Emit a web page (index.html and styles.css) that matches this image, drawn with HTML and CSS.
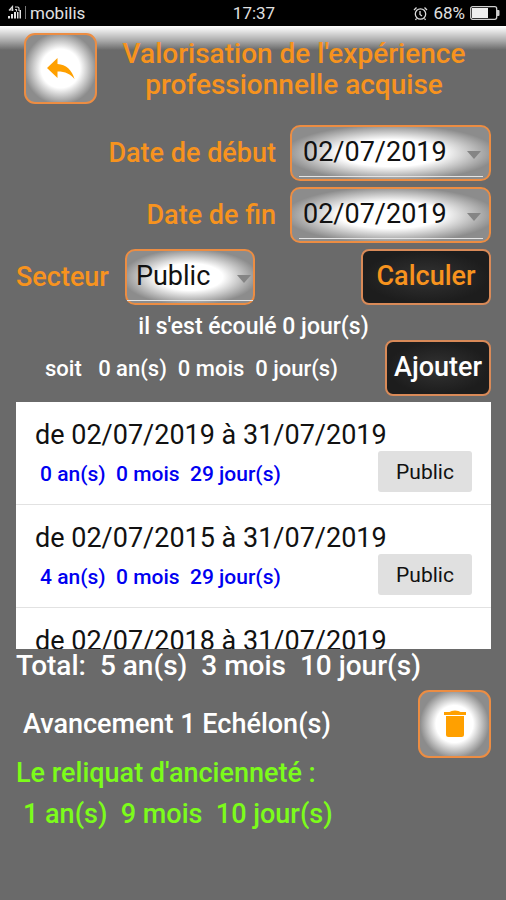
FILE: index.html
```html
<!DOCTYPE html>
<html lang="fr">
<head>
<meta charset="utf-8">
<meta name="viewport" content="width=device-width, initial-scale=1">
<title>Valorisation de l'expérience professionnelle acquise</title>
<link rel="stylesheet" href="styles.css">
</head>
<body>
<div class="status">
  <div class="status-side">
    <svg class="signal" width="20" height="16" viewBox="0 0 20 16" aria-hidden="true">
      <g fill="none" stroke="#d8d8d8" stroke-width="1.200"><path d="M1 5.500L4.500 1.500v4.500M1 5h4.500M7 2h2.500q1.500 0 1.500 1.500v2.500M7 4.500h1.500v2"/></g>
      <path fill="#e4e4e4" d="M0 11h2v2.500H0zM3 9h2v4.500H3zM6 7h2v6.500H6zM9 7h1.500v6.500H9zM11.500 5H13v8.500h-1.500z"/>
      <path fill="#777" d="M17 1h1v13h-1z"/>
    </svg>
    <span>mobilis</span>
  </div>
  <span class="clock">17:37</span>
  <div class="status-side status-end">
    <svg width="15" height="15" viewBox="0 0 15 15" fill="none" stroke="#dcdcdc" stroke-width="1.300" aria-hidden="true"><circle cx="7.500" cy="8" r="5.200"/><path d="M7 5v3.500l2 1.500M1 4l2.500-2.500M14 4l-2.500-2.500M3.500 12.500L2.500 14M11.500 12.500l1 1.500"/></svg>
    <span>68%</span>
    <svg width="30" height="14" viewBox="0 0 30 14" aria-hidden="true"><rect x=".7" y=".7" width="26" height="12.600" rx="2" fill="none" stroke="#d0d0d0" stroke-width="1.300"/><path fill="#eee" d="M2 2h16v10H2z"/><path fill="#d0d0d0" d="M27 4h1.500q1 0 1 1v4q0 1-1 1H27z"/></svg>
  </div>
</div>
<main class="screen">
  <header class="header">
    <button class="glow back" type="button" aria-label="Retour">
      <svg width="28" height="22" viewBox="0 0 28 22" aria-hidden="true"><path fill="#ffa000" d="M0 10L10.500 0v6C19 6.500 25 12 27.500 21c-4-5-9-7.500-17-7.500V20z"/></svg>
    </button>
    <h1 class="title">Valorisation de l'expérience professionnelle acquise</h1>
  </header>
  <form class="form">
    <div class="row row-end">
      <label for="debut">Date de début</label>
      <div class="picker picker-date">
        <select id="debut"><option>02/07/2019</option></select>
        <svg class="arrow" width="14" height="8" viewBox="0 0 14 8" aria-hidden="true"><path fill="#858585" d="M0 0h14L7 8z"/></svg>
      </div>
    </div>
    <div class="row row-end">
      <label for="fin">Date de fin</label>
      <div class="picker picker-date">
        <select id="fin"><option>02/07/2019</option></select>
        <svg class="arrow" width="14" height="8" viewBox="0 0 14 8" aria-hidden="true"><path fill="#858585" d="M0 0h14L7 8z"/></svg>
      </div>
    </div>
    <div class="row">
      <label for="secteur">Secteur</label>
      <div class="picker picker-sector">
        <select id="secteur"><option>Public</option></select>
        <svg class="arrow" width="14" height="8" viewBox="0 0 14 8" aria-hidden="true"><path fill="#858585" d="M0 0h14L7 8z"/></svg>
      </div>
      <button class="dark calc" type="button">Calculer</button>
    </div>
  </form>
  <p class="elapsed">il s'est écoulé 0 jour(s)</p>
  <div class="row split">
    <p class="detail">soit   0 an(s)  0 mois  0 jour(s)</p>
    <button class="dark add" type="button">Ajouter</button>
  </div>
  <ul class="list">
    <li class="item">
      <p class="period">de 02/07/2019 à 31/07/2019</p>
      <div class="item-foot"><span class="duration">0 an(s)  0 mois  29 jour(s)</span><button class="tag" type="button">Public</button></div>
    </li>
    <li class="item">
      <p class="period">de 02/07/2015 à 31/07/2019</p>
      <div class="item-foot"><span class="duration">4 an(s)  0 mois  29 jour(s)</span><button class="tag" type="button">Public</button></div>
    </li>
    <li class="item">
      <p class="period">de 02/07/2018 à 31/07/2019</p>
    </li>
  </ul>
  <p class="total">Total:  5 an(s)  3 mois  10 jour(s)</p>
  <div class="row advance">
    <p>Avancement 1 Echélon(s)</p>
    <button class="glow trash" type="button" aria-label="Supprimer">
      <svg width="22" height="28" viewBox="0 0 22 28" aria-hidden="true"><path fill="#ffa000" d="M0 2h5.500Q7 .5 11 .5T16.500 2H22v3H0zM2 6h18v18.500q0 2.500-2.500 2.500h-13Q2 27 2 24.500z"/></svg>
    </button>
  </div>
  <div class="rest">
    <p>Le reliquat d'ancienneté :</p>
    <p class="rest-value">1 an(s)  9 mois  10 jour(s)</p>
  </div>
</main>
</body>
</html>
```
FILE: styles.css
```css
* { box-sizing: border-box; }
body {
  margin: 0;
  min-height: 100vh;
  background: #6a6a6a;
  color: #fff;
  font-family: Roboto, "Liberation Sans", sans-serif;
  font-size: 27px;
  font-weight: 500;
}
h1, p, ul { margin: 0; padding: 0; }
p { white-space: pre; }
button, select { font: inherit; margin: 0; }

.status {
  display: flex;
  align-items: center;
  height: 26px;
  padding: 0 6px 0 8px;
  background: #000;
  color: #e0e0e0;
  font-size: 17px;
  font-weight: 400;
}
.status-side { flex: 1; display: flex; align-items: center; gap: 2px; }
.status-end { justify-content: flex-end; gap: 5px; }

.screen {
  padding: 7px 15px 0 16px;
  background: linear-gradient(#fff 0, #dedede 6px, #a8a8a8 15px, #6a6a6a 24px);
}
.header { display: flex; padding-left: 8px; }
.title {
  flex: 1;
  padding-top: 5px;
  color: #f7931e;
  font-size: 28px;
  font-weight: 500;
  line-height: 31px;
  text-align: center;
}
.glow {
  display: flex;
  align-items: center;
  justify-content: center;
  flex: none;
  width: 73px;
  padding: 0;
  border: 2px solid #ec8d43;
  border-radius: 11px;
  background: radial-gradient(circle closest-side, #fff 58%, #8c8c8c 108%);
}
.back { height: 71px; }
.trash { height: 68px; }

.form { display: grid; gap: 6px; padding-top: 21px; color: #f7931e; }
.row { display: flex; align-items: center; }
.row-end { justify-content: flex-end; gap: 14px; }
.picker {
  position: relative;
  height: 56px;
  padding: 0 6px 0 7px;
  border: 2px solid #ec8d43;
  border-radius: 10px;
  background: radial-gradient(closest-side, #fff 52%, #8c8c8c 108%);
}
.picker-date { width: 201px; }
.picker-sector { width: 130px; margin-left: 16px; padding: 0; }
.picker select {
  display: block;
  width: 100%;
  height: 50px;
  padding: 0 0 0 4px;
  border: 0;
  border-bottom: 1px solid #e4e4e4;
  border-radius: 0;
  background: none;
  color: #111;
  font-weight: 400;
  appearance: none;
}
.picker-sector select { padding-left: 9px; }
.arrow { position: absolute; right: 8px; top: 24px; pointer-events: none; }
.picker-sector .arrow { right: 2px; }

.dark {
  height: 56px;
  padding: 0 0 2px;
  border: 2px solid #d98a58;
  border-radius: 8px;
  background: radial-gradient(closest-side, #333, #1d1d1d);
  color: #fff;
}
.calc { width: 130px; margin-left: auto; color: #f7931e; }
.add { width: 106px; }

.elapsed { padding-top: 8px; font-size: 23px; line-height: 27px; text-align: center; }
.split { justify-content: space-between; padding-left: 29px; }
.detail { font-size: 22px; }

.list { height: 247px; margin-top: 6px; overflow: hidden; background: #fff; list-style: none; }
.item { height: 103px; padding: 17px 19px 0; border-bottom: 1px solid #e2e2e2; }
.period { color: #111; font-weight: 400; line-height: 32px; }
.item-foot { display: flex; align-items: flex-start; justify-content: space-between; padding-left: 5px; }
.duration { color: #0000f0; font-size: 21px; line-height: 46px; white-space: pre; }
.tag {
  width: 94px;
  height: 41px;
  padding: 0;
  border: 0;
  border-radius: 3px;
  background: #e0e0e0;
  color: #111;
  font-size: 21px;
  font-weight: 400;
}

.total { font-size: 28px; line-height: 34px; }
.advance { justify-content: space-between; padding: 7px 0 0 7px; }
.rest { margin-top: -5px; color: #7cfc1a; line-height: 41px; }
.rest-value { padding-left: 7px; }
```
